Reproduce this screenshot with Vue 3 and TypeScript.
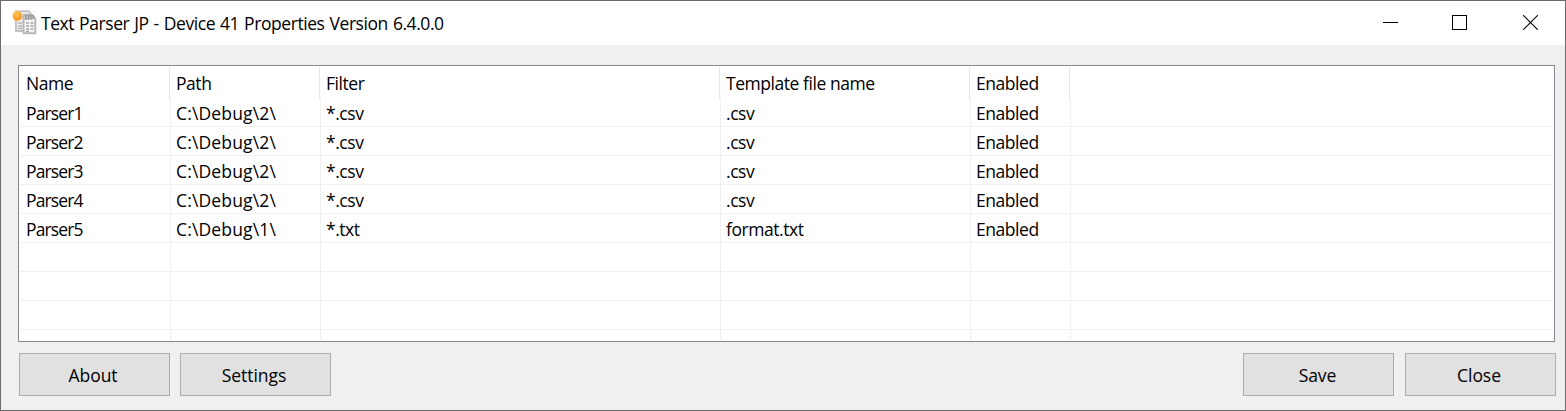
<script setup lang="ts">
interface Parser {
  name: string
  path: string
  filter: string
  template: string
  status: string
}

const columns: string[] = ['Name', 'Path', 'Filter', 'Template file name', 'Enabled']

const parsers: Parser[] = [
  { name: 'Parser1', path: 'C:\\Debug\\2\\', filter: '*.csv', template: '.csv', status: 'Enabled' },
  { name: 'Parser2', path: 'C:\\Debug\\2\\', filter: '*.csv', template: '.csv', status: 'Enabled' },
  { name: 'Parser3', path: 'C:\\Debug\\2\\', filter: '*.csv', template: '.csv', status: 'Enabled' },
  { name: 'Parser4', path: 'C:\\Debug\\2\\', filter: '*.csv', template: '.csv', status: 'Enabled' },
  { name: 'Parser5', path: 'C:\\Debug\\1\\', filter: '*.txt', template: 'format.txt', status: 'Enabled' },
]
const blankRows = 4
</script>

<template>
  <div class="window">
    <header class="titlebar">
      <svg class="app-icon" width="25" height="25" viewBox="0 0 25 25">
        <defs>
          <radialGradient id="sun" cx="0.4" cy="0.35" r="0.7">
            <stop offset="0" stop-color="#ffc45c" />
            <stop offset="0.6" stop-color="#fba32b" />
            <stop offset="1" stop-color="#f08a1c" />
          </radialGradient>
        </defs>
        <path d="M4 1.200h12.500l2.500 3V21H4z" fill="#f0f0f0" stroke="#c2c2c2" stroke-width="2" />
        <path d="M6 13h4M6 16h4M6 18.500h4" stroke="#b4b4b4" stroke-width="1.300" />
        <path d="M11.500 5H20.500L23.300 8.500V23.300H11.500z" fill="#f6f6f6" stroke="#b8b8b8" stroke-width="2" />
        <path d="M12 6h9v4h-9z" fill="#c4c4c4" />
        <path d="M14 4.500v5M16.500 4.500v5M19 4.500v5M21.300 5v4" stroke="#858585" stroke-width="1" />
        <path d="M14 13h3M18.500 13h3M14 16h3M18.500 16h3M14 19h3M18.500 19h3M14 21.500h3" stroke="#a5a5a5" stroke-width="1.300" />
        <circle cx="5.300" cy="5.900" r="5.300" fill="#ffd896" opacity="0.700" />
        <circle cx="5.400" cy="6" r="4.500" fill="url(#sun)" />
      </svg>
      <h1 class="title">Text Parser JP - Device 41 Properties Version 6.4.0.0</h1>
      <nav class="controls">
        <svg width="15" height="15" viewBox="0 0 15 15" shape-rendering="crispEdges">
          <path d="M0 7.500h15" stroke="#000" />
        </svg>
        <svg width="15" height="15" viewBox="0 0 15 15" shape-rendering="crispEdges">
          <rect x="0.500" y="0.500" width="14" height="14" fill="none" stroke="#000" />
        </svg>
        <svg width="15" height="15" viewBox="0 0 15 15">
          <path d="M0 0L15 15M15 0L0 15" stroke="#000" stroke-width="1.050" />
        </svg>
      </nav>
    </header>
    <main class="body">
      <section class="list">
        <div class="row head">
          <span v-for="c in columns" :key="c" class="cell">{{ c }}</span>
        </div>
        <div v-for="p in parsers" :key="p.name" class="row">
          <span class="cell name">{{ p.name }}</span>
          <span class="cell path">{{ p.path }}</span>
          <span class="cell">{{ p.filter }}</span>
          <span class="cell">{{ p.template }}</span>
          <span class="cell">{{ p.status }}</span>
        </div>
        <div v-for="n in blankRows" :key="n" class="row">
          <span v-for="c in columns" :key="c" class="cell"></span>
        </div>
      </section>
      <footer class="actions">
        <button class="btn">About</button>
        <button class="btn">Settings</button>
        <button class="btn save">Save</button>
        <button class="btn close">Close</button>
      </footer>
    </main>
  </div>
</template>

<style>
body {
  margin: 0;
  overflow: hidden;
}
</style>

<style scoped>
.window {
  box-sizing: border-box;
  width: 1566px;
  height: 411px;
  border: 1px solid #6b6b6b;
  background: #f0f0f0;
  color: #000;
  font-family: "Open Sans", "Noto Sans", sans-serif;
  font-size: 17.5px;
  letter-spacing: -0.45px;
  overflow: hidden;
}
.titlebar {
  display: flex;
  height: 44px;
  background: #fff;
}
.app-icon {
  flex: none;
  margin: 9px 4px 0 11px;
}
.title {
  margin: 0;
  font-size: 17.5px;
  font-weight: 400;
  letter-spacing: -0.43px;
  word-spacing: 0.85px;
  line-height: 45px;
  white-space: nowrap;
}
.controls {
  display: flex;
  margin: 14px 27px 0 auto;
}
.controls svg + svg {
  margin-left: 54px;
}
.controls svg:last-child {
  margin-left: 56px;
}
.body {
  padding: 20px 9px 0 17px;
}
.list {
  box-sizing: border-box;
  width: 1537px;
  height: 277px;
  padding: 1px;
  border: 1px solid #828790;
  background: #fff;
  overflow: clip;
  overflow-clip-margin: content-box;
}
.row {
  box-sizing: border-box;
  display: grid;
  grid-template-columns: 151px 150px 400px 250px 100px;
  height: 29px;
  border-bottom: 1px solid #f0f0f0;
}
.row.head {
  grid-template-columns: 150px 150px 400px 250px 100px;
  height: 31px;
  border-bottom: 0;
}
.cell {
  box-sizing: border-box;
  height: 100%;
  padding-left: 5px;
  border-right: 1px solid #f0f0f0;
  line-height: 31px;
  white-space: nowrap;
}
.cell:first-child,
.head .cell {
  padding-left: 6px;
}
.head .cell {
  border-color: #e5e5e5;
  line-height: 32px;
}
.cell.name {
  letter-spacing: -0.85px;
}
.cell.path {
  letter-spacing: 0.15px;
}
.actions {
  display: flex;
  margin: 11px 0 0 1px;
}
.btn {
  box-sizing: border-box;
  width: 151px;
  height: 43px;
  margin: 0 10px 0 0;
  padding: 0 3px 0 0;
  border: 1px solid #adadad;
  border-radius: 0;
  background: #e1e1e1;
  color: #000;
  font: inherit;
  letter-spacing: -0.05px;
  line-height: 42px;
}
.btn.save {
  margin: 0 11px 0 auto;
  padding: 0 2px 0 0;
}
.btn.close {
  margin: 0;
}
</style>
